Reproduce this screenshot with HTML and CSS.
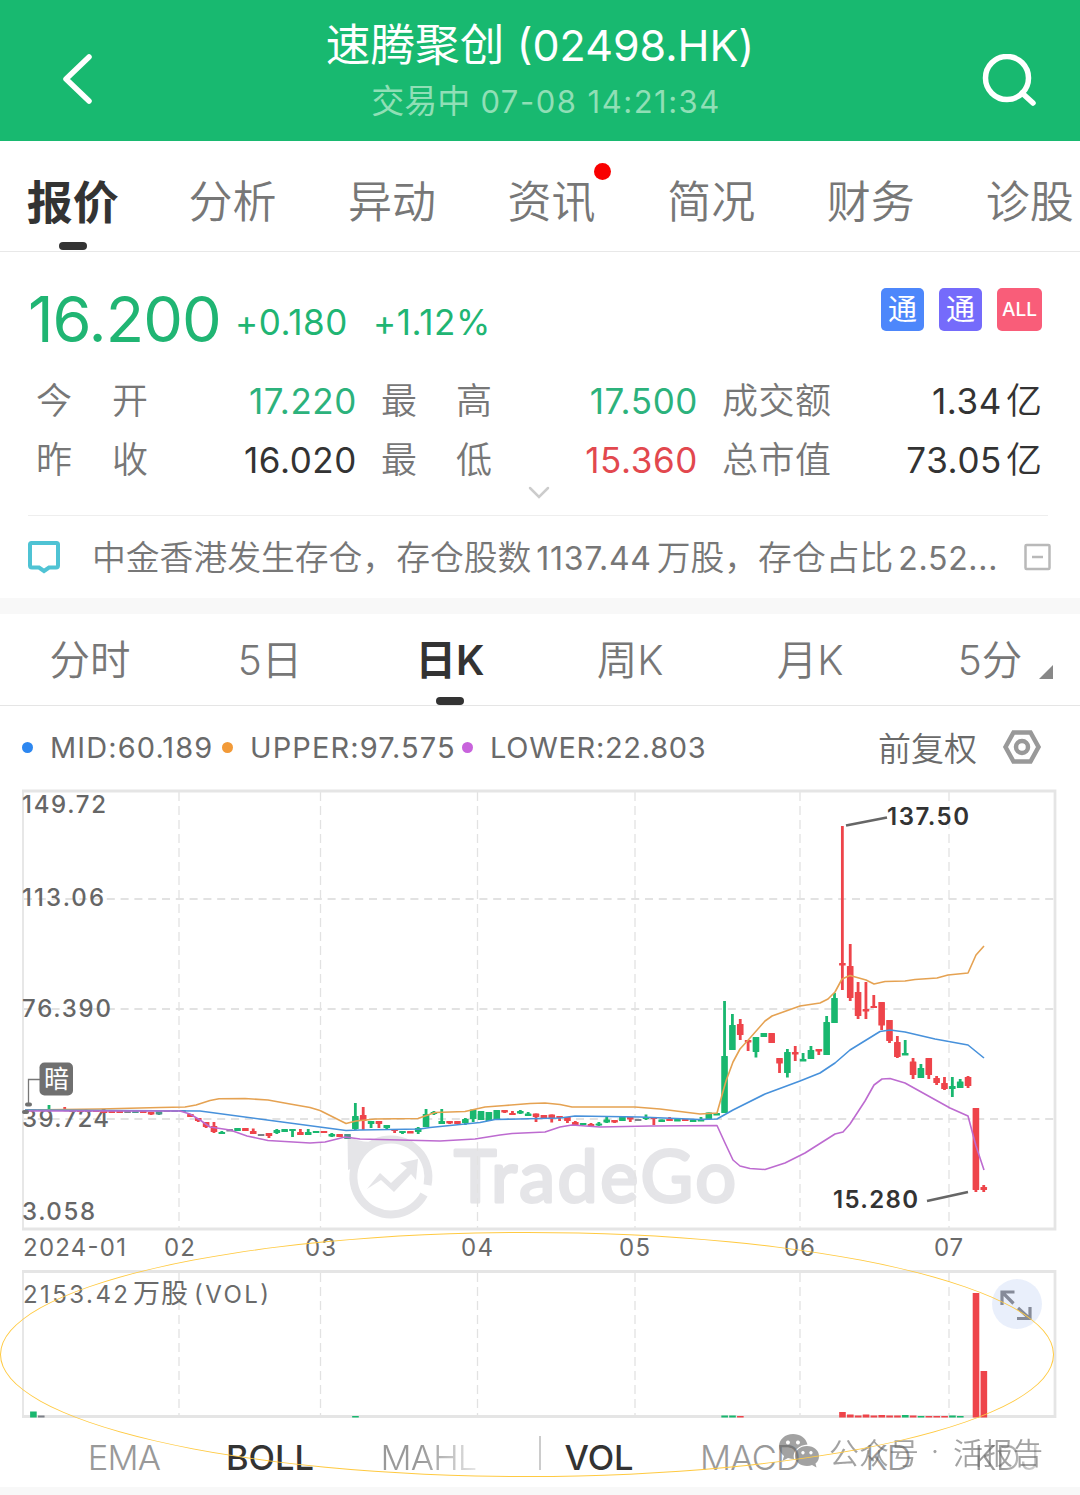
FILE: index.html
```html
<!DOCTYPE html>
<html lang="zh-CN">
	<head>
		<meta charset="UTF-8" />
		<meta name="viewport" content="width=device-width, initial-scale=1.0" />
		<title>速腾聚创 (02498.HK)</title>
		<link rel="stylesheet" href="styles.css">
	</head>
	<body>
		<header class="head">
			<svg class="back" width="32" height="52" viewBox="0 0 32 52">
				<path d="M28 4L5 26L28 48" />
			</svg>
			<div class="title">
				<h1><span>速腾聚创</span> <span class="code">(02498.HK)</span></h1>
				<p><span>交易中</span> 07-08 14:21:34</p>
			</div>
			<svg class="search" width="56" height="56" viewBox="0 0 56 56">
				<circle cx="25" cy="24" r="21.5" />
				<path d="M40 39L51 49" />
			</svg>
		</header>

		<nav class="tabs">
			<a class="active">报价</a>
			<a>分析</a>
			<a>异动</a>
			<a class="unread">资讯</a>
			<a>简况</a>
			<a>财务</a>
			<a>诊股</a>
		</nav>

		<section class="quote">
			<div class="price-row">
				<span class="price">16.200</span>
				<span class="change">+0.180</span>
				<span class="change">+1.12%</span>
				<div class="badges">
					<span class="badge blue">通</span>
					<span class="badge purple">通</span>
					<span class="badge pink">ALL</span>
				</div>
			</div>
			<div class="stats">
				<span class="label"><i>今</i><i>开</i></span><span class="value green">17.220</span>
				<span class="label"><i>最</i><i>高</i></span><span class="value green">17.500</span>
				<span class="label"><i>成</i><i>交</i><i>额</i></span><span class="value">1.34<b>亿</b></span>
				<span class="label"><i>昨</i><i>收</i></span><span class="value">16.020</span>
				<span class="label"><i>最</i><i>低</i></span><span class="value red">15.360</span>
				<span class="label"><i>总</i><i>市</i><i>值</i></span><span class="value">73.05<b>亿</b></span>
			</div>
			<svg class="more" width="22" height="14" viewBox="0 0 22 14"><path d="M2 2L11 11L20 2" /></svg>
		</section>

		<section class="news">
			<svg width="34" height="34" viewBox="0 0 34 34">
				<path class="bubble" d="M4.500 3H29.500Q31 3 31 4.500V25.500Q31 27.500 29 27.500H22L17 31L12 27.500H5Q3 27.500 3 25.500V4.500Q3 3 4.500 3Z" />
			</svg>
			<p>中金香港发生存仓，存仓股数<span>1137.44</span>万股，存仓占比<span>2.52...</span></p>
			<svg class="fold" width="28" height="28" viewBox="0 0 28 28">
				<rect x="1.500" y="2" width="24" height="24" rx="1" />
				<path d="M8 14H19" />
			</svg>
		</section>

		<nav class="periods">
			<a>分时</a>
			<a>5日</a>
			<a class="active">日K</a>
			<a>周K</a>
			<a>月K</a>
			<a class="menu">5分</a>
		</nav>

		<div class="legend">
			<span class="mid">MID:60.189</span>
			<span class="upper">UPPER:97.575</span>
			<span class="lower">LOWER:22.803</span>
			<span class="adjust">前复权</span>
			<svg width="40" height="36" viewBox="0 0 40 36">
				<path d="M11.500 3.500H28.500L36.500 18L28.500 32.500H11.500L3.500 18Z" />
				<circle cx="20" cy="18" r="6" />
			</svg>
		</div>

		<svg class="chart" width="1080" height="636" viewBox="0 788 1080 636">
			<!-- TradeGo logo behind the candles -->
			<g class="logo">
				<path class="logo-ring" d="M424 1194.500A37.500 37.500 0 1 1 427.500 1185" />
				<path d="M347.500 1134Q354 1142 372 1142L353 1168L348 1170Z" />
				<path d="M367 1189L380 1173L391 1183L407 1168L400 1163L418 1159L416 1180L411 1174L394 1192L381 1180Z" />
				<text x="454" y="1202" textLength="282">TradeGo</text>
			</g>
			<g id="grid"></g>
			<path class="frame" d="M22 791H1055V1229H22M22 1271.500H1055V1416.500H22" />
			<path class="frame thin" d="M23 791V1229M23 1271V1416" />

			<g class="scale">
				<text x="22" y="813" textLength="84">149.72</text>
				<text x="22" y="906" textLength="82">113.06</text>
				<text x="22" y="1017" textLength="89">76.390</text>
				<text x="22" y="1127" textLength="87">39.724</text>
				<text x="22" y="1220" textLength="73">3.058</text>
			</g>

			<g id="candles"></g>
			<g id="volume"></g>
			<polyline class="line upper-line" points="25,1110 100,1109 160,1107.500 185,1107 196,1105 210,1100.500 219,1098.700 245,1098.500 268,1100 290,1104 310,1107.500 320,1110.500 335,1118 346,1123.500 356,1121 375,1119 418,1118.500 435,1112.500 465,1111.500 485,1107 505,1105.500 530,1103.500 545,1103 560,1104.500 572,1107 635,1107 660,1109 700,1114 717,1113 726,1081 733,1062 740,1049 750,1038 765,1021 772,1016 800,1006 820,1003 828,999 835,992 842,979 850,975.500 866,980 874,984 885,981.500 905,981 915,979.500 937,978 948,975 968,973 976,955 984,946" />
			<polyline class="line mid-line" points="25,1110 200,1111 346,1130.500 360,1130 420,1129 430,1127.500 480,1122.500 495,1119.500 560,1118 575,1116 640,1117 700,1119.500 717,1119 733,1110 765,1094 800,1081 820,1073 835,1063 850,1050 880,1031.500 890,1030 905,1032 935,1039 968,1045 984,1058" />
			<polyline class="line lower-line" points="25,1111 180,1111 190,1114 200,1120 210,1127 230,1130 247,1136 268,1140.500 310,1143 325,1142 345,1137 360,1139 400,1140 440,1141 475,1139 500,1135 512,1133.500 545,1132 560,1127 572,1125 600,1127 650,1126 717,1125.500 725,1143 733,1160 740,1166 750,1168.500 765,1169.500 785,1163 805,1153 835,1134 843,1132 850,1124 865,1101 874,1085 882,1079 890,1078.500 905,1083 950,1108 968,1116 976,1146 984,1170" />

			<!-- grey market marker -->
			<path class="pin" d="M28.500 1103V1079.500H40" />
			<rect class="pin-dot" x="25" y="1102.500" width="7" height="4" rx="2" />
			<rect class="pin-dot" x="22" y="1110" width="7" height="4" rx="2" />
			<rect class="pin-box" x="39.500" y="1062.500" width="33.500" height="33" rx="5" />
			<text class="pin-text" x="44" y="1088">暗</text>

			<path class="leader" d="M846 825.500L887 817.500M927 1201L968 1192" />
			<text class="extreme" x="887" y="825" textLength="82">137.50</text>
			<text class="extreme" x="833" y="1208" textLength="85">15.280</text>

			<g class="dates">
				<text x="23" y="1256" textLength="103">2024-01</text>
				<text x="164" y="1256" textLength="31">02</text>
				<text x="305" y="1256" textLength="31">03</text>
				<text x="461" y="1256" textLength="32">04</text>
				<text x="619" y="1256" textLength="31">05</text>
				<text x="784" y="1256" textLength="31">06</text>
				<text x="934" y="1256" textLength="29">07</text>
				<text x="23" y="1303" textLength="105">2153.42</text>
				<text class="cn" x="133" y="1303" textLength="55">万股</text>
				<text x="194" y="1303" textLength="75">(VOL)</text>
			</g>

			<circle class="expand-bg" cx="1017" cy="1304" r="25" />
			<path class="expand" d="M1002 1305V1292H1014.500M1003 1293L1013.500 1303.500M1017 1318.500H1030V1307M1018 1308L1029 1318" />
		</svg>

		<footer class="indicators">
			<a class="ema">EMA</a>
			<a class="active boll">BOLL</a>
			<a class="fade mahl">MAHL</a>
			<hr />
			<a class="active vol">VOL</a>
			<a class="macd">MACD</a>
			<a class="kd">KD</a>
			<a class="fade kdj">KDJ</a>
		</footer>

		<div class="watermark">
			<svg width="42" height="36" viewBox="0 0 42 36">
				<path fill-rule="evenodd" d="M15 1C7 1 1 6.500 1 13.500C1 17 3 20.500 6 23L4.500 28L10 25Q13 26 16 26C14 18 21 12 29.500 11.500C28 5 22 1 15 1ZM10 7.500A2 2 0 1 1 9.900 7.500ZM20 7.500A2 2 0 1 1 19.900 7.500Z" />
				<path fill-rule="evenodd" d="M29 13C22 13 17 17.500 17 23C17 29 22.500 33 29 33Q32 33 34 32L38.500 34.500L37.500 30.500C40 28.500 41 26 41 23C41 17.500 36 13 29 13ZM25 18A1.700 1.700 0 1 1 24.900 18ZM33 18A1.700 1.700 0 1 1 32.900 18Z" />
			</svg>
			<span class="channel">公众号</span><span class="dot">·</span><span class="name">活报告</span>
		</div>
		<div class="ring"></div>

		<script>
			var NS = "http://www.w3.org/2000/svg";
			var G = "#19b76f";
			var R = "#ee444a";
			var N = "#7d8088";
			var T = "#4c958c";

			// colour, high, body top, body bottom, low
			var candles = [
				[N, 1109, 1109, 1111, 1111], [N, 1109, 1109, 1111, 1111],
				[G, 1105, 1109, 1110, 1110], [R, 1109, 1109, 1111, 1111],
				[R, 1107, 1109, 1111, 1111], [N, 1110, 1110, 1112, 1112],
				[R, 1110, 1110, 1112, 1112], [N, 1110, 1110, 1112, 1112],
				[R, 1110, 1110, 1112, 1112], [R, 1111, 1111, 1113, 1113],
				[R, 1111, 1111, 1113, 1113], [R, 1111, 1111, 1113, 1113],
				[N, 1111, 1111, 1113, 1113], [T, 1111, 1111, 1113, 1113],
				[R, 1111, 1111, 1113, 1113], [R, 1112, 1112, 1114.5, 1115],
				[T, 1110, 1110, 1114.5, 1115], [N, 1110, 1110, 1112, 1112],
				[T, 1110, 1110, 1112, 1112], [N, 1110, 1110, 1112, 1112],
				[R, 1114, 1114, 1117, 1117], [R, 1118, 1118, 1121, 1122],
				[R, 1122, 1122, 1127, 1128], [R, 1122, 1126, 1132, 1133],
				[G, 1131, 1132, 1134, 1134], [N, 1129, 1129, 1131.5, 1131],
				[G, 1128, 1128, 1131, 1131], [R, 1128, 1128, 1131, 1131],
				[R, 1128.5, 1131, 1134, 1134], [N, 1134, 1134, 1136, 1136],
				[R, 1133, 1133, 1136, 1138], [G, 1129, 1130, 1133, 1134],
				[G, 1129, 1129, 1132, 1132], [G, 1129, 1129, 1131, 1137],
				[R, 1129, 1132, 1135, 1135], [G, 1129, 1132, 1135, 1135],
				[G, 1131, 1131, 1133, 1133], [R, 1131, 1131, 1133, 1133],
				[G, 1133, 1134, 1136.5, 1137], [R, 1134, 1134, 1137, 1137],
				[T, 1134, 1134, 1139, 1139], [G, 1103, 1116, 1129, 1130],
				[R, 1107, 1115, 1121, 1130], [G, 1121, 1121, 1124, 1128],
				[R, 1121, 1121, 1124, 1128], [G, 1125, 1125, 1128, 1130],
				[R, 1129, 1129, 1131, 1133], [G, 1131, 1131, 1133, 1134],
				[R, 1131, 1131, 1133.5, 1133], [G, 1127, 1128, 1132, 1134],
				[G, 1109, 1114, 1127, 1127], [G, 1111, 1112, 1114, 1115],
				[G, 1109, 1121, 1124, 1124], [R, 1121, 1121, 1123.5, 1124],
				[R, 1121, 1121, 1124, 1124], [G, 1118, 1119, 1123, 1125],
				[G, 1109.5, 1109.5, 1119, 1122], [G, 1111, 1111, 1120, 1120],
				[G, 1112, 1112, 1121, 1121], [G, 1110, 1110, 1120, 1120],
				[R, 1110, 1110, 1112.5, 1113], [R, 1111, 1113, 1115, 1115],
				[G, 1110, 1111, 1113.5, 1114], [G, 1112, 1113.5, 1116, 1116],
				[R, 1113.5, 1113.5, 1117, 1122], [R, 1115, 1115, 1118, 1118],
				[R, 1114.5, 1114.5, 1118, 1122.5], [R, 1116, 1116, 1118, 1121],
				[R, 1117, 1117, 1121, 1123], [R, 1121, 1122, 1125, 1125],
				[G, 1123, 1123, 1125, 1125], [R, 1123, 1124, 1126, 1127],
				[G, 1122, 1123.5, 1125.5, 1126], [G, 1117, 1119.5, 1122.5, 1123],
				[R, 1120, 1120, 1122.5, 1123], [G, 1116.5, 1116.5, 1121, 1121],
				[R, 1117, 1117, 1119.5, 1122], [N, 1119, 1119, 1121, 1121],
				[G, 1114.5, 1117, 1119, 1120], [R, 1117, 1117, 1119, 1125],
				[G, 1119.5, 1119.5, 1122, 1122], [R, 1117, 1119, 1121, 1121],
				[G, 1119, 1119, 1121.5, 1121], [R, 1119, 1119, 1121, 1121],
				[G, 1119.5, 1119.5, 1122, 1122], [G, 1117, 1119, 1121.5, 1121],
				[G, 1112.5, 1112.5, 1119, 1119], [G, 1113, 1113, 1115.5, 1115],
				[G, 1001, 1056, 1113, 1113], [G, 1014, 1025, 1050, 1050],
				[R, 1019, 1024, 1035, 1040], [R, 1040, 1040, 1042.5, 1051],
				[G, 1037, 1037, 1052, 1057.5], [G, 1033, 1033, 1037, 1037],
				[R, 1033, 1033, 1043, 1043], [R, 1058, 1058, 1063.5, 1073],
				[G, 1049, 1052, 1073, 1077.5], [R, 1046, 1052, 1054.5, 1061],
				[G, 1053, 1059, 1061.5, 1061], [G, 1046, 1050, 1059, 1059],
				[R, 1049, 1049, 1051.5, 1055], [G, 1016, 1022, 1055, 1055],
				[G, 993, 998, 1023, 1023], [R, 826, 963, 965.5, 990],
				[R, 944, 966, 998, 1001], [R, 982, 992, 1016, 1019],
				[R, 982, 1009, 1011.5, 1019], [R, 995, 1006, 1008, 1008],
				[R, 1002, 1002, 1025.5, 1030], [R, 1020, 1020, 1041, 1043],
				[R, 1036, 1042, 1057, 1058], [G, 1040, 1053, 1055.5, 1055],
				[R, 1058, 1061.5, 1075, 1079], [G, 1064, 1068, 1078, 1078],
				[R, 1058, 1058, 1075, 1079], [R, 1076, 1078, 1083, 1085],
				[R, 1077, 1083, 1089, 1090], [G, 1077, 1086, 1089, 1097],
				[G, 1079, 1081.5, 1088, 1088], [R, 1076, 1077, 1086, 1088],
				[R, 1108, 1108, 1190, 1192], [R, 1185, 1187, 1190, 1192]
			];

			// bar heights, everything else is too small to show
			var volume = {
				0: 6, 1: 2, 41: 1.5, 88: 2, 89: 2, 90: 1.5, 103: 5.5, 104: 3, 105: 2, 106: 3, 107: 2,
				108: 2.5, 109: 2, 110: 2, 111: 2.5, 112: 2, 113: 1.5, 114: 1.5, 115: 1.5,
				116: 1.5, 117: 2, 118: 1.5, 120: 124.5, 121: 46.5
			};

			function add(parent, tag, attrs) {
				let el = document.createElementNS(NS, tag);
				for (let key in attrs) {
					el.setAttribute(key, attrs[key]);
				}
				document.getElementById(parent).appendChild(el);
			}

			[179, 320.5, 477.5, 635, 800, 949].forEach(function (x) {
				add("grid", "path", { d: "M" + x + " 792V1228M" + x + " 1273V1415", class: "v-line" });
			});
			[899, 1009, 1119].forEach(function (y) {
				add("grid", "path", { d: "M24 " + y + "H1054", class: "h-line" });
			});

			candles.forEach(function (c, i) {
				let x = 33.3 + i * 7.855;
				add("candles", "rect", { x: x - 1.4, y: c[1], width: 2.8, height: c[4] - c[1], fill: c[0] });
				add("candles", "rect", { x: x - 3.3, y: c[2], width: 6.6, height: c[3] - c[2], rx: 0.5, fill: c[0] });
				if (volume[i]) {
					add("volume", "rect", {
						x: x - 3.2,
						y: 1417.5 - volume[i],
						width: 6.6,
						height: volume[i],
						fill: i == 0 ? G : c[0]
					});
				}
			});
		</script>
	</body>
</html>
```

FILE: styles.css
```css
body {
	margin: 0;
	position: relative;
	width: 1080px;
	height: 1495px;
	overflow: hidden;
	background: #fff;
	color: #777;
	font-family: Inter, "Noto Sans CJK SC", sans-serif;
	font-weight: 350;
}

svg {
	display: block;
	flex: none;
	fill: none;
}

h1,
p {
	margin: 0;
	font-weight: inherit;
}

i,
b {
	font-style: normal;
	font-weight: inherit;
}

/* Header */
.head {
	display: flex;
	justify-content: space-between;
	box-sizing: border-box;
	height: 141px;
	padding: 0 42px 0 61px;
	background: #18b970;
	color: #fff;
}

.back {
	margin-top: 53px;
	stroke: #fff;
	stroke-width: 5.5;
	stroke-linecap: round;
	stroke-linejoin: round;
}

.search {
	margin-top: 54px;
	stroke: #fff;
	stroke-width: 5.5;
	stroke-linecap: round;
}

.title {
	width: 460px;
	margin-left: 5px;
	text-align: center;
	white-space: nowrap;
}

.title h1 {
	margin-top: 16px;
	font-size: 44.6px;
	line-height: 58px;
	font-weight: 400;
}

.title .code {
	font-size: 43px;
}

.title p {
	margin-top: 8px;
	padding-left: 12px;
	color: #90dfb6;
	font-size: 31px;
	font-weight: 400;
	line-height: 38px;
	letter-spacing: 1.5px;
}

.title p span {
	font-size: 33px;
	letter-spacing: 0;
}

/* Main tabs */
.tabs {
	display: flex;
	box-sizing: border-box;
	width: 1087px;
	height: 111px;
	margin-left: -7px;
	border-bottom: 1px solid #e8e8e8;
}

.tabs a {
	position: relative;
	flex: 0 1 159.6px;
	font-size: 44px;
	line-height: 122px;
	text-align: center;
	white-space: nowrap;
}

.tabs a {
	flex-shrink: 0;
}

.tabs a:last-child {
	flex-basis: 129.4px;
	padding-left: 0;
	text-indent: 29px;
}

.tabs .active {
	color: #333;
	font-size: 46px;
	font-weight: 600;
}

.active::after {
	content: "";
	position: absolute;
	left: 50%;
	bottom: 1px;
	width: 28px;
	height: 8px;
	margin-left: -14px;
	border-radius: 4px;
	background: #333;
}

.unread::after {
	content: "";
	position: absolute;
	left: 122px;
	top: 22px;
	width: 17px;
	height: 17px;
	border-radius: 50%;
	background: #f90000;
}

/* Price and stats */
.quote {
	height: 263px;
	margin: 0 32px 0 28px;
	border-bottom: 1px solid #eee;
	font-weight: 400;
}

.price-row {
	display: flex;
	align-items: center;
	height: 122px;
	color: #20b573;
}

.price {
	width: 207px;
	margin-top: 11px;
	font-size: 63px;
	line-height: 120px;
	letter-spacing: -1px;
}

.change {
	width: 138px;
	margin-top: 18px;
	font-size: 35px;
	letter-spacing: 0.6px;
}

.badges {
	display: flex;
	align-self: flex-start;
	gap: 15px;
	margin: 36px 0 0 auto;
	padding-right: 6px;
}

.badge {
	width: 43px;
	height: 43px;
	border-radius: 5px;
	color: #fff;
	font-size: 29px;
	line-height: 43px;
	text-align: center;
}

.blue {
	background: #4d87fb;
}

.purple {
	background: #756bfb;
}

.pink {
	width: 45px;
	background: #f95d79;
	font-size: 19px;
	font-weight: 500;
}

.stats {
	display: grid;
	grid-template-columns: 112px 209px 135px 206px 133px 211px;
	grid-auto-rows: 59px;
	padding-left: 8px;
	line-height: 54px;
}

.label {
	display: flex;
	justify-content: space-between;
	padding-left: 24px;
	font-size: 36px;
	font-weight: 350;
}

.label:nth-child(6n + 1) {
	padding-left: 0;
}

.value {
	color: #333;
	font-size: 35px;
	letter-spacing: 0.6px;
	text-align: right;
}

.value b {
	margin-left: 4px;
	font-size: 36px;
	font-weight: 350;
	letter-spacing: 0;
}

.value.green {
	color: #2cb27c;
}

.value.red {
	color: #e2484e;
}

.more {
	margin: -6px auto 0 500px;
	stroke: #ccc;
	stroke-width: 2.5;
	stroke-linecap: round;
}

/* News line */
.news {
	display: flex;
	align-items: center;
	height: 82px;
	padding: 0 27px;
}

.bubble {
	stroke: #4fc3d4;
	stroke-width: 4;
}

.news p {
	width: 932px;
	margin: -3px 0 0 31px;
	font-size: 33.8px;
	white-space: nowrap;
}

.news p span {
	margin: 0 5px;
	font-size: 32px;
	font-weight: 400;
	letter-spacing: 0.7px;
}

.fold {
	stroke: #b9b9b9;
	stroke-width: 2.5;
}

/* Chart periods */
.periods {
	display: grid;
	grid-template-columns: repeat(6, 1fr);
	box-sizing: border-box;
	height: 108px;
	border-top: 16px solid #f8f8f8;
	border-bottom: 1px solid #e5e5e5;
}

.periods a {
	position: relative;
	height: 91px;
	font-size: 40.5px;
	line-height: 94px;
	text-align: center;
}

.periods .active {
	color: #333;
	font-weight: 600;
}

.periods .active::after {
	bottom: 0;
}

.menu::after {
	content: "";
	position: absolute;
	left: 139px;
	top: 51px;
	border-left: 14px solid transparent;
	border-bottom: 14px solid #888;
}

/* Chart legend */
.legend {
	display: flex;
	align-items: center;
	height: 82px;
	padding-left: 22px;
	color: #6a6a6a;
	font-size: 29px;
	font-weight: 400;
	letter-spacing: 1.1px;
}

.mid,
.upper,
.lower {
	display: flex;
	align-items: center;
	white-space: nowrap;
	width: 200px;
}

.upper {
	width: 240px;
}

.lower {
	width: 416px;
	letter-spacing: 0.7px;
}

.mid::before,
.upper::before,
.lower::before {
	content: "";
	width: 11px;
	height: 11px;
	margin-right: 17px;
	border-radius: 50%;
	background: #2d87f0;
}

.upper::before {
	background: #f29a38;
}

.lower::before {
	background: #c863dc;
}

.adjust {
	width: 124px;
	font-size: 33px;
	font-weight: 350;
	letter-spacing: 0;
}

.legend svg {
	stroke: #999;
	stroke-width: 4.5;
}

/* Chart */
.chart text {
	font-size: 24px;
	font-weight: 400;
}

.frame {
	stroke: #e5e5e5;
	stroke-width: 2.8;
}

.thin {
	stroke-width: 1.8;
}

.v-line {
	stroke: #e2e2e2;
	stroke-width: 1.3;
	stroke-dasharray: 9 5;
}

.h-line {
	stroke: #e2e2e2;
	stroke-width: 2.2;
	stroke-dasharray: 8 5.8;
}

.logo {
	fill: #e5e5e8;
}

.logo-ring {
	fill: none;
	stroke: #e5e5e8;
	stroke-width: 8;
}

.chart .logo text {
	font-family: Lato, sans-serif;
	font-size: 72px;
	stroke: #e5e5e8;
	stroke-width: 3;
	stroke-linejoin: round;
}

.chart .scale text {
	fill: #666;
	font-weight: 500;
}

.line {
	stroke-width: 1.6;
	stroke-linejoin: round;
}

.upper-line {
	stroke: #e5a252;
}

.mid-line {
	stroke: #4791db;
}

.lower-line {
	stroke: #bd6bd0;
}

.pin {
	stroke: #777;
	stroke-width: 1.3;
}

.pin-dot,
.pin-box {
	fill: #707070;
}

.chart .pin-text {
	fill: #fff;
	font-size: 25px;
}

.leader {
	stroke: #666;
	stroke-width: 2.8;
}

.chart .extreme {
	fill: #333;
	font-weight: 600;
}

.dates {
	fill: #6a6a6a;
}

.chart .dates .cn {
	font-size: 27px;
}

.expand-bg {
	fill: #e7edfb;
	opacity: 0.9;
}

.expand {
	stroke: #868b99;
	stroke-width: 3.2;
}

/* Indicator switch */
.indicators {
	display: flex;
	align-items: center;
	height: 63px;
	border-bottom: 8px solid #f8f8f8;
	color: #999;
	font-size: 34.5px;
	letter-spacing: -0.8px;
}

.indicators a {
	flex: none;
	box-sizing: border-box;
	margin-top: 3px;
	text-align: center;
}

.ema {
	width: 190px;
	padding-left: 58px;
}

.boll {
	width: 160px;
}

.mahl {
	width: 157px;
}

.vol {
	width: 116px;
}

.macd {
	width: 186px;
}

.kd {
	width: 90px;
}

.kdj {
	width: 147px;
}

.indicators .active {
	color: #333;
	font-weight: 500;
	letter-spacing: 0;
}

.indicators .active::after {
	display: none;
}

.indicators a.fade {
	background: linear-gradient(90deg, #999 45%, #e5e5e5 80%);
	-webkit-background-clip: text;
	color: transparent;
}

.indicators hr {
	flex: none;
	width: 2px;
	height: 34px;
	margin: 0 0 5px 32px;
	border: 0;
	background: #ccc;
}

/* Overlays */
.watermark {
	position: absolute;
	left: 778px;
	top: 1433px;
	display: flex;
	align-items: center;
	height: 36px;
	color: #666;
	font-size: 30px;
	opacity: 0.6;
	white-space: nowrap;
}

.watermark svg {
	fill: #666;
}

.watermark .channel {
	margin-left: 9px;
}

.watermark .dot {
	width: 32px;
	text-align: center;
}

.watermark .name {
	margin-left: 2px;
}

.ring {
	position: absolute;
	box-sizing: border-box;
	left: 0;
	top: 1232px;
	width: 1054px;
	height: 245px;
	border: 1.4px solid #ffca42;
	border-radius: 50%;
}
```
